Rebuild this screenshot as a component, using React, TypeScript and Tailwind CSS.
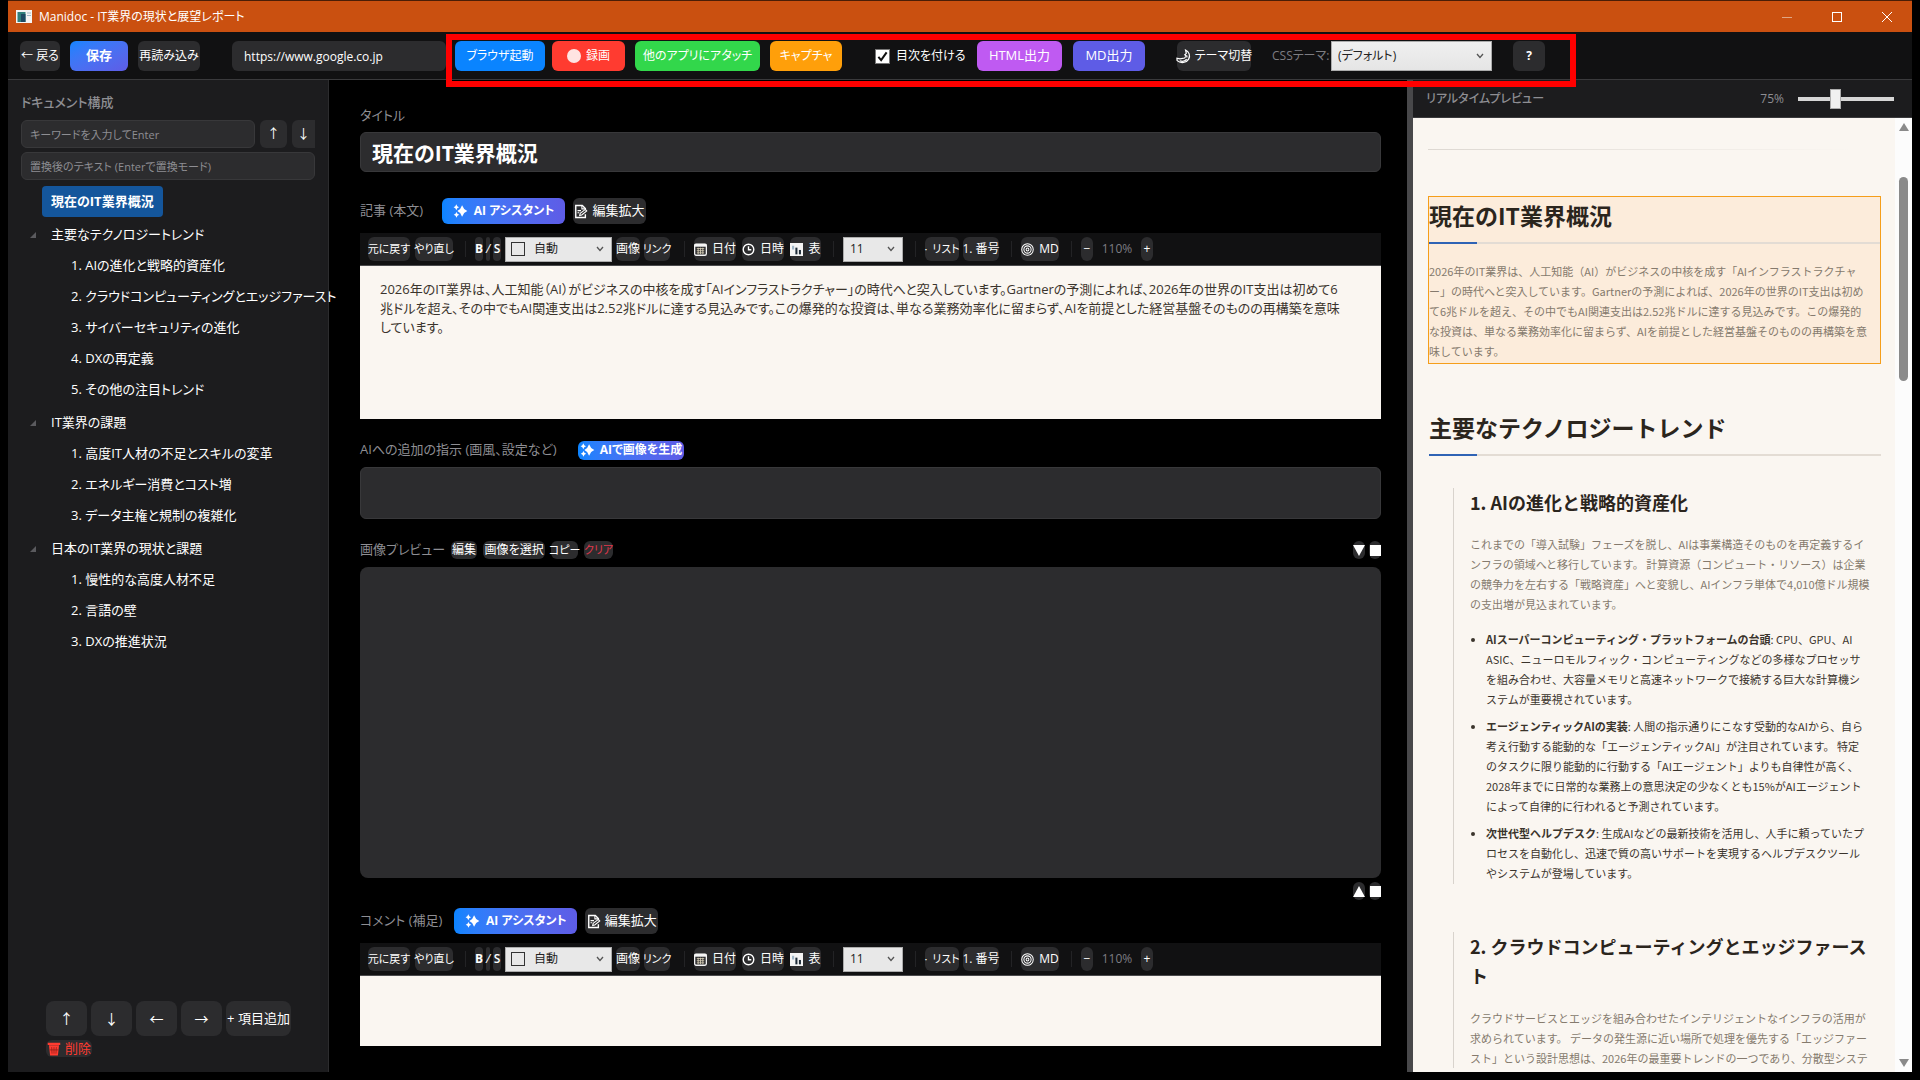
import type { ReactNode } from 'react'
import clsx from 'clsx'

interface TreeNode {
  label: string
  children?: string[]
}

const TREE: TreeNode[] = [
  { label: '現在のIT業界概況' },
  {
    label: '主要なテクノロジートレンド',
    children: [
      '1. AIの進化と戦略的資産化',
      '2. クラウドコンピューティングとエッジファースト',
      '3. サイバーセキュリティの進化',
      '4. DXの再定義',
      '5. その他の注目トレンド',
    ],
  },
  {
    label: 'IT業界の課題',
    children: ['1. 高度IT人材の不足とスキルの変革', '2. エネルギー消費とコスト増', '3. データ主権と規制の複雑化'],
  },
  {
    label: '日本のIT業界の現状と課題',
    children: ['1. 慢性的な高度人材不足', '2. 言語の壁', '3. DXの推進状況'],
  },
]

const ARTICLE = [
  '2026年のIT業界は、人工知能（AI）がビジネスの中核を成す「AIインフラストラクチャー」の時代へと突入しています。Gartnerの予測によれば、2026年の世界のIT支出は初めて6',
  '兆ドルを超え、その中でもAI関連支出は2.52兆ドルに達する見込みです。この爆発的な投資は、単なる業務効率化に留まらず、AIを前提とした経営基盤そのものの再構築を意味',
  'しています。',
].join('\n')

/* ---------- icons ---------- */

function SparkleIcon() {
  return (
    <svg viewBox="0 0 16 16" className="h-[14px] w-[15px] shrink-0" fill="currentColor" aria-hidden="true">
      <path d="M9.800 1.500 12.200 5.600l3.600 2.400-3.600 2.400-2.400 4.100-2.200-4.100L4.400 8l3.200-2.400Z" />
      <path d="m3.200.4 1.100 2.200 2 1.100-2 1.100-1.100 2.200-1.100-2.200-2-1.100 2-1.100Z" />
      <path d="m3.400 9 1.100 2.200 2 1.100-2 1.100-1.100 2.200-1.100-2.200-2-1.100 2-1.100Z" />
    </svg>
  )
}

function MemoIcon() {
  return (
    <svg viewBox="0 0 16 16" className="h-[15px] w-[14px] shrink-0" fill="none" stroke="currentColor" strokeWidth="1.600" aria-hidden="true">
      <path d="M13 6V4.500L9.500 1.200H2v13.600h11V11" />
      <path d="M9 1.500V5h3.500M4 7h4M4 9.500h2" strokeWidth="1.200" />
      <path d="m6.500 12.500.6-2.300L13 5.600l1.600 1.700-5.800 4.700Z" fill="#2c2c2e" strokeWidth="1.200" />
    </svg>
  )
}

function CalendarIcon() {
  return (
    <svg viewBox="0 0 14 14" className="h-[13px] w-[13px] shrink-0" aria-hidden="true">
      <rect x="0.700" y="1.200" width="12.600" height="12" rx="1.500" fill="none" stroke="#f4f4f4" strokeWidth="1.400" />
      <rect x="0.700" y="1" width="12.600" height="3" fill="#f4f4f4" />
      <path d="M3 6h8M3 8.300h8M3 10.600h8M4.500 5v7M7 5v7M9.500 5v7" stroke="#d8d0b8" strokeWidth="0.900" />
    </svg>
  )
}

function ClockIcon() {
  return (
    <svg viewBox="0 0 14 14" className="h-[13px] w-[13px] shrink-0" fill="none" stroke="currentColor" strokeWidth="1.500" aria-hidden="true">
      <circle cx="7" cy="7" r="5.700" />
      <path d="M7 3.500V7.300H10" />
    </svg>
  )
}

function ChartIcon() {
  return (
    <svg viewBox="0 0 14 14" className="h-[13px] w-[13px] shrink-0" aria-hidden="true">
      <rect x="0.700" y="0.700" width="12.600" height="12.600" fill="#f4f4f4" stroke="#f4f4f4" strokeWidth="1.400" />
      <path d="M2.200 3h2.300v4H2.200Z" fill="#9fb6c8" />
      <path d="M5.800 5h2.200v7.200H5.800Z" fill="#1d2b38" />
      <path d="M9.600 7.500h2.200v4.700H9.600Z" fill="#1d2b38" />
    </svg>
  )
}

function TargetIcon() {
  return (
    <svg viewBox="0 0 14 14" className="h-[13px] w-[13px] shrink-0" fill="none" stroke="currentColor" strokeWidth="1.100" aria-hidden="true">
      <circle cx="7" cy="7" r="6.200" />
      <circle cx="7" cy="7" r="3.900" />
      <circle cx="7" cy="7" r="1.500" />
    </svg>
  )
}

function MoonIcon() {
  return (
    <svg viewBox="0 0 16 16" className="h-[15px] w-[15px] shrink-0" fill="none" stroke="currentColor" strokeWidth="1.300" aria-hidden="true">
      <path d="M10.200 1.200c3.800 1.600 5.300 6 3.300 9.600-2.300 4-8.300 5.100-12.300 1.600L1 9.800l3.200.7 5-.9 1.600-2.200-1.400-1.200 1.600-1.600Z" />
      <path d="M11.600 7v2M4 12.500c2.500 1 5.500.4 7.400-1.600" />
    </svg>
  )
}

function TrashIcon() {
  return (
    <svg viewBox="0 0 14 15" className="h-[14px] w-[14px] shrink-0" aria-hidden="true">
      <path d="M.3.800h13.400v2.400H.3ZM1.600 3.600h10.800l-1.200 10.800H2.800Z" fill="#ff3b30" />
      <path d="M4.500 5.500l.4 7M7 5.500v7M9.500 5.500l-.4 7M2.500 8.500h9" stroke="#8a1d18" strokeWidth="0.800" />
    </svg>
  )
}

function Chevron() {
  return (
    <svg viewBox="0 0 8 6" className="pointer-events-none absolute top-1/2 right-2 h-[6px] w-2 -translate-y-1/2" fill="none" stroke="#555" strokeWidth="1.300" aria-hidden="true">
      <path d="m1 1 3 3.500L7 1" />
    </svg>
  )
}

/* ---------- small controls ---------- */

interface BtnProps {
  className?: string
  label?: string
  children: ReactNode
}

function Btn({ className, label, children }: BtnProps) {
  return (
    <button
      type="button"
      aria-label={label}
      className={clsx('flex shrink-0 items-center justify-center whitespace-nowrap text-white', className)}
    >
      {children}
    </button>
  )
}

function ToolBtn({ className, label, children }: BtnProps) {
  return (
    <Btn label={label} className={clsx('h-6 gap-[5px] rounded-md bg-[#2c2c2e]', className)}>
      {children}
    </Btn>
  )
}

function Separator() {
  return <span className="mr-[9px] ml-3 h-4 w-px shrink-0 bg-[#232325]" />
}

function EditorToolbar({ id }: { id: string }) {
  return (
    <div className="flex h-[33px] items-center border-b border-[#4a4a4c] bg-[#111112] pl-2 text-[12px]">
      <div className="flex gap-[5px] text-[11px]">
        <ToolBtn className="w-[42px]">元に戻す</ToolBtn>
        <ToolBtn className="w-[38px]">やり直し</ToolBtn>
      </div>
      <Separator />
      <div className="mr-[2px] flex items-center gap-1">
        <div className="flex gap-[3px]">
          <ToolBtn className="w-2 font-bold">B</ToolBtn>
          <ToolBtn className="w-1 italic">/</ToolBtn>
          <ToolBtn className="w-2 font-semibold">S</ToolBtn>
        </div>
        <div className="relative">
          <span className="pointer-events-none absolute top-[5px] left-[6px] size-[14px] border border-[#333]" />
          <select id={`${id}-color`} aria-label="文字色" className="h-[25px] w-[107px] appearance-none border border-[#acacac] bg-[#e8e8e8] pl-7 text-[#222]">
            <option>自動</option>
          </select>
          <Chevron />
        </div>
        <ToolBtn className="w-6">画像</ToolBtn>
        <ToolBtn className="w-[26px] text-[11px]">リンク</ToolBtn>
      </div>
      <Separator />
      <div className="flex gap-[6px]">
        <ToolBtn className="w-[42px]"><CalendarIcon />日付</ToolBtn>
        <ToolBtn className="w-[42px]"><ClockIcon />日時</ToolBtn>
        <ToolBtn className="w-[31px]"><ChartIcon />表</ToolBtn>
      </div>
      <Separator />
      <div className="relative">
        <select id={`${id}-size`} aria-label="文字サイズ" className="h-[25px] w-[60px] appearance-none border border-[#acacac] bg-[#e8e8e8] pl-[6px] text-[#222]">
          <option>11</option>
        </select>
        <Chevron />
      </div>
      <Separator />
      <div className="flex gap-1">
        <ToolBtn className="w-[34px] gap-[3px] text-[11px]"><span>·</span>リスト</ToolBtn>
        <ToolBtn className="w-9">1. 番号</ToolBtn>
      </div>
      <Separator />
      <ToolBtn className="w-[38px]"><TargetIcon />MD</ToolBtn>
      <Separator />
      <ToolBtn label="縮小" className="w-3 text-[#aaa]">−</ToolBtn>
      <span className="w-12 text-center text-[#7d7d82]">110%</span>
      <ToolBtn label="拡大" className="w-3">+</ToolBtn>
    </div>
  )
}

function AssistRow({ id, label }: { id: string; label: string }) {
  return (
    <div className="flex h-[26px] items-center">
      <label htmlFor={id} className="mr-3 min-w-[70px] text-[13px] text-[#8e8e93]">{label}</label>
      <Btn className="h-[26px] w-[123px] gap-[6px] rounded-md bg-linear-to-r from-[#0a84ff] to-[#5e5ce6] text-[12px] font-bold">
        <SparkleIcon />AI アシスタント
      </Btn>
      <Btn className="ml-2 h-[26px] w-[73px] gap-1 rounded-md bg-[#2c2c2e] text-[13px]">
        <MemoIcon />編集拡大
      </Btn>
    </div>
  )
}

/* ---------- window parts ---------- */

function TitleBar() {
  return (
    <div className="flex h-8 shrink-0 items-center border-t border-[#4a1d06] bg-[#ca5010] pl-2 text-white">
      <svg viewBox="0 0 16 13" className="h-[13px] w-4" aria-hidden="true">
        <rect width="16" height="13" fill="#f4f4f4" />
        <rect x="1.500" y="2" width="8" height="10" fill="#2f7f7c" />
        <rect x="5" y="4" width="4.500" height="8" fill="#1d4a63" />
        <path d="M11 3h4M11 5.500h4" stroke="#8ab" strokeWidth="0.800" />
      </svg>
      <span className="ml-[7px] text-[12px]">Manidoc - IT業界の現状と展望レポート</span>
      <div className="ml-auto flex">
        <Btn label="最小化" className="h-[31px] w-[50px]">
          <svg viewBox="0 0 12 12" className="size-3" stroke="#e0a684"><path d="M1 6.500h10" /></svg>
        </Btn>
        <Btn label="最大化" className="h-[31px] w-[50px]">
          <svg viewBox="0 0 12 12" className="size-3" fill="none" stroke="#fff"><rect x="1.500" y="1.500" width="9" height="9" /></svg>
        </Btn>
        <Btn label="閉じる" className="h-[31px] w-[50px]">
          <svg viewBox="0 0 12 12" className="size-3" stroke="#fff"><path d="m1 1 10 10M11 1 1 11" /></svg>
        </Btn>
      </div>
    </div>
  )
}

function Toolbar() {
  return (
    <header className="flex h-12 shrink-0 items-start border-b border-[#3a3a3c] bg-[#111112] pt-[9px] pl-3 text-[12px]">
      <Btn className="h-[30px] w-10 rounded-md bg-[#2c2c2e]">← 戻る</Btn>
      <Btn className="ml-[10px] h-[30px] w-[58px] rounded-md bg-linear-to-br from-[#0a84ff] to-[#5e5ce6] text-[13px] font-bold">保存</Btn>
      <Btn className="ml-[10px] h-[30px] w-[62px] rounded-md bg-[#2c2c2e]">再読み込み</Btn>
      <input
        aria-label="URL"
        className="ml-8 h-[30px] w-[214px] rounded-md bg-[#2c2c2e] px-3 text-white"
        defaultValue="https://www.google.co.jp"
      />
      <div className="relative ml-[9px] flex items-center">
        <Btn className="h-[30px] w-[90px] rounded-md bg-[#0a84ff]">ブラウザ起動</Btn>
        <Btn className="ml-[7px] h-[30px] w-[73px] gap-[5px] rounded-md bg-[#ff3b30]">
          <span className="size-[14px] rounded-full bg-[#ffe4e2]" />録画
        </Btn>
        <Btn className="ml-[10px] h-[30px] w-[125px] rounded-md bg-[#32d74b]">他のアプリにアタッチ</Btn>
        <Btn className="ml-[10px] h-[30px] w-[72px] rounded-md bg-[#ff9f0a]">キャプチャ</Btn>
        <label className="relative ml-[33px] flex w-[102px] items-center gap-[6px] whitespace-nowrap text-white">
          <input type="checkbox" defaultChecked className="size-[15px] shrink-0 appearance-none border border-[#777] bg-white" />
          <svg viewBox="0 0 12 12" className="pointer-events-none absolute left-[2px] h-[11px] w-[11px]" fill="none" stroke="#111" strokeWidth="2.200" aria-hidden="true">
            <path d="m1.500 6.500 3 3.500L10.500 1.500" />
          </svg>
          目次を付ける
        </label>
        <Btn className="h-[30px] w-[85px] rounded-md bg-[#bf5af2] text-[13px]">HTML出力</Btn>
        <Btn className="ml-[11px] h-[30px] w-[72px] rounded-md bg-[#5e5ce6] text-[13px]">MD出力</Btn>
        <Btn className="ml-8 h-[30px] w-[74px] gap-1 rounded-md bg-[#2c2c2e]"><MoonIcon />テーマ切替</Btn>
        <label htmlFor="css-theme" className="ml-[21px] w-[59px] whitespace-nowrap text-[#7d7d82]">CSSテーマ:</label>
        <div className="relative">
          <select id="css-theme" className="h-[30px] w-[161px] appearance-none border border-[#acacac] bg-linear-to-b from-[#f0f0f0] to-[#e5e5e5] pl-[6px] text-[#222]">
            <option>(デフォルト)</option>
          </select>
          <Chevron />
        </div>
        <Btn label="ヘルプ" className="ml-[21px] h-[30px] w-8 rounded-md bg-[#2c2c2e] font-bold">?</Btn>
        {/* output tools highlight */}
        <div className="pointer-events-none absolute -top-[7px] -right-[31px] -bottom-[16px] -left-[9px] z-10 border-[6px] border-[#ff0000]" />
      </div>
    </header>
  )
}

function Sidebar() {
  return (
    <aside className="relative z-10 flex w-[321px] shrink-0 flex-col border-r border-[#2c2c2e] bg-[#1c1c1e] px-[13px] pt-3 text-white">
      <h2 className="text-[13px] leading-5 font-medium text-[#8e8e93]">ドキュメント構成</h2>
      <div className="mt-2 flex gap-[5px]">
        <input
          aria-label="検索"
          placeholder="キーワードを入力してEnter"
          className="h-7 min-w-0 flex-1 rounded-md border border-[#38383a] bg-[#2c2c2e] px-2 text-[11px] placeholder:text-[#8e8e93]"
        />
        <Btn label="前を検索" className="h-7 w-[27px] rounded-md bg-[#2c2c2e] text-[13px]">↑</Btn>
        <Btn label="次を検索" className="h-7 w-[23px] rounded-l-md bg-[#2c2c2e] text-[13px]">↓</Btn>
      </div>
      <input
        aria-label="置換"
        placeholder="置換後のテキスト (Enterで置換モード)"
        className="mt-1 h-7 rounded-md border border-[#38383a] bg-[#2c2c2e] px-2 text-[11px] placeholder:text-[#8e8e93]"
      />
      <ul className="mt-[6px] space-y-[2px] text-[13px]">
        {TREE.map((node, i) => (
          <li key={node.label}>
            <div className="flex h-[31px] items-center">
              <svg viewBox="0 0 6 6" className="mr-[6px] ml-[9px] size-[6px]" aria-hidden="true">
                {node.children && <path d="M6 0v6H0Z" fill="#5a5a5e" />}
              </svg>
              <button
                type="button"
                className={clsx('h-[31px] rounded-sm px-[9px] whitespace-nowrap', i === 0 && 'bg-[#14569c] font-bold')}
              >
                {node.label}
              </button>
            </div>
            {node.children && (
              <ul className="pl-[50px]">
                {node.children.map((child) => (
                  <li key={child} className="h-[31px]">
                    <button type="button" className="h-[31px] whitespace-nowrap">{child}</button>
                  </li>
                ))}
              </ul>
            )}
          </li>
        ))}
      </ul>
      <div className="mt-auto pb-[15px] pl-[25px] text-[14px]">
        <div className="flex gap-1">
          <Btn label="上へ" className="h-[35px] w-[41px] rounded-lg bg-[#2c2c2e]">↑</Btn>
          <Btn label="下へ" className="h-[35px] w-[41px] rounded-lg bg-[#2c2c2e]">↓</Btn>
          <Btn label="左へ" className="h-[35px] w-[41px] rounded-lg bg-[#2c2c2e]">←</Btn>
          <Btn label="右へ" className="h-[35px] w-[41px] rounded-lg bg-[#2c2c2e]">→</Btn>
          <Btn className="h-[35px] w-[65px] rounded-lg bg-[#2c2c2e] text-[13px]">+ 項目追加</Btn>
        </div>
        <Btn className="mt-1 h-[17px] w-[46px] gap-1 rounded-md bg-[#2c2c2e] text-[13px]"><TrashIcon /><span className="text-[#ff3b30]">削除</span></Btn>
      </div>
    </aside>
  )
}

function SmallBtn({ className, label, children }: BtnProps) {
  return (
    <Btn label={label} className={clsx('h-[18px] rounded-md bg-[#2c2c2e]', className)}>
      {children}
    </Btn>
  )
}

function Square() {
  return <span className="size-[11px] bg-white" />
}

function Editor() {
  return (
    <main className="flex min-w-0 flex-1 flex-col bg-black pt-[25px] pr-[26px] pb-[26px] pl-[31px]">
      <label htmlFor="doc-title" className="text-[13px] leading-5 text-[#8e8e93]">タイトル</label>
      <input
        id="doc-title"
        defaultValue="現在のIT業界概況"
        className="mt-[7px] h-10 rounded-md border border-[#38383a] bg-[#2c2c2e] px-[11px] text-[21px] font-bold text-white"
      />
      <div className="mt-[26px]">
        <AssistRow id="article" label="記事 (本文)" />
      </div>
      <div className="mt-[9px]">
        <EditorToolbar id="article" />
        <textarea
          id="article"
          defaultValue={ARTICLE}
          className="block h-[153px] w-full resize-none overflow-hidden bg-[#faf6f1] px-5 py-[14px] text-[13px] leading-[19px] whitespace-pre text-[#3a342c]"
        />
      </div>
      <div className="mt-[21px] flex h-5 items-center">
        <label htmlFor="ai-extra" className="mr-3 min-w-[206px] text-[13px] text-[#8e8e93]">AIへの追加の指示 (画風、設定など)</label>
        <Btn className="h-[19px] w-[106px] gap-[5px] rounded-md bg-linear-to-r from-[#0a84ff] to-[#5e5ce6] text-[12px] font-bold">
          <SparkleIcon />AIで画像を生成
        </Btn>
      </div>
      <textarea id="ai-extra" className="mt-[7px] block h-[52px] resize-none rounded-md border border-[#38383a] bg-[#2c2c2e] text-white" />
      <div className="mt-[21px] flex h-5 items-center gap-[6px]">
        <span className="text-[13px] text-[#8e8e93]">画像プレビュー</span>
        <SmallBtn className="w-[26px] text-[12px]">編集</SmallBtn>
        <SmallBtn className="w-[62px] text-[12px]">画像を選択</SmallBtn>
        <SmallBtn className="w-[27px] text-[11px]">コピー</SmallBtn>
        <SmallBtn className="w-[29px] text-[11px]"><span className="text-[#e0384c]">クリア</span></SmallBtn>
        <div className="ml-auto flex gap-1">
          <SmallBtn label="下へ広げる" className="w-3">
            <svg viewBox="0 0 12 11" className="h-[11px] w-3 shrink-0" fill="#fff"><path d="M0 0h12L6 11Z" /></svg>
          </SmallBtn>
          <SmallBtn label="最大化" className="w-3"><Square /></SmallBtn>
        </div>
      </div>
      <div className="mt-[7px] min-h-40 flex-1 rounded-lg bg-[#2c2c2e]" />
      <div className="mt-1 ml-auto flex gap-1">
        <SmallBtn label="上へ縮める" className="w-3">
          <svg viewBox="0 0 12 11" className="h-[11px] w-3 shrink-0" fill="#fff"><path d="M0 11h12L6 0Z" /></svg>
        </SmallBtn>
        <SmallBtn label="元のサイズ" className="w-3"><Square /></SmallBtn>
      </div>
      <div className="mt-2">
        <AssistRow id="comment" label="コメント (補足)" />
      </div>
      <div className="mt-[9px]">
        <EditorToolbar id="comment" />
        <textarea id="comment" className="block h-[70px] w-full resize-none bg-[#faf6f1] px-5 py-[14px] text-[13px] text-[#3a342c]" />
      </div>
    </main>
  )
}

/* ---------- preview ---------- */

function Lines({ rows }: { rows: ReactNode[] }) {
  return (
    <>
      {rows.map((row, i) => (
        <span key={i} className="block whitespace-nowrap">{row}</span>
      ))}
    </>
  )
}

function ChapterTitle({ children }: { children: ReactNode }) {
  return (
    <>
      <h2 className="text-[23px] leading-[30px] font-bold text-[#2b251d]">{children}</h2>
      <div className="mt-3 h-[2px] bg-[#e3dcd4]">
        <div className="h-[2px] w-12 bg-[#2f63b5]" />
      </div>
    </>
  )
}

function Preview() {
  return (
    <section className="flex w-[505px] shrink-0 flex-col border-l-[6px] border-[#48484a] bg-[#1c1c1e]">
      <div className="flex h-[38px] shrink-0 items-center border-b border-[#3a3a3c] pr-[18px] pl-[13px] text-[12px] text-[#8e8e93]">
        <h2 className="font-medium">リアルタイムプレビュー</h2>
        <label htmlFor="zoom" className="mr-[14px] ml-auto">75%</label>
        <input
          id="zoom"
          type="range"
          min={0}
          max={100}
          defaultValue={38}
          className="h-5 w-24 appearance-none bg-transparent [&::-webkit-slider-runnable-track]:h-1 [&::-webkit-slider-runnable-track]:bg-[#d6d6d6] [&::-webkit-slider-thumb]:-mt-2 [&::-webkit-slider-thumb]:h-5 [&::-webkit-slider-thumb]:w-[11px] [&::-webkit-slider-thumb]:appearance-none [&::-webkit-slider-thumb]:border [&::-webkit-slider-thumb]:border-[#acacac] [&::-webkit-slider-thumb]:bg-[#f0f0f0]"
        />
      </div>
      <div className="flex min-h-0 flex-1 bg-[#faf6f1] font-['Noto_Sans_CJK_JP',sans-serif] [font-feature-settings:normal]">
        <article className="min-w-0 flex-1 overflow-hidden pr-[14px] pl-[15px] text-[11px] leading-5 text-[#3a342c]">
          <div className="mt-[31px] mr-7 h-px bg-linear-to-r from-[#ddd8d2] to-[#faf6f1]" />
          <div className="mt-[46px] h-[168px] border border-[#f59e1b] bg-[#fcecdb] pt-[3px]">
            <ChapterTitle>現在のIT業界概況</ChapterTitle>
            <p className="mt-[17px] text-[#857a6d]">
              <Lines
                rows={[
                  '2026年のIT業界は、人工知能（AI）がビジネスの中核を成す「AIインフラストラクチャ',
                  'ー」の時代へと突入しています。Gartnerの予測によれば、2026年の世界のIT支出は初め',
                  'て6兆ドルを超え、その中でもAI関連支出は2.52兆ドルに達する見込みです。この爆発的',
                  'な投資は、単なる業務効率化に留まらず、AIを前提とした経営基盤そのものの再構築を意',
                  '味しています。',
                ]}
              />
            </p>
          </div>
          <div className="mt-12 pl-px">
            <ChapterTitle>主要なテクノロジートレンド</ChapterTitle>
          </div>
          <div className="mt-8 ml-[25px] border-l border-[#d8d3cd] pb-px pl-4">
            <h3 className="text-[18px] leading-[29px] font-bold text-[#2b251d]">1. AIの進化と戦略的資産化</h3>
            <p className="mt-[17px] text-[#857a6d]">
              <Lines
                rows={[
                  'これまでの「導入試験」フェーズを脱し、AIは事業構造そのものを再定義するイ',
                  'ンフラの領域へと移行しています。 計算資源（コンピュート・リソース）は企業',
                  'の競争力を左右する「戦略資産」へと変貌し、AIインフラ単体で4,010億ドル規模',
                  'の支出増が見込まれています。',
                ]}
              />
            </p>
            <ul className="mt-[15px] list-disc space-y-[7px] pl-4">
              <li>
                <Lines
                  rows={[
                    <><strong>AIスーパーコンピューティング・プラットフォームの台頭</strong>: CPU、GPU、AI</>,
                    'ASIC、ニューロモルフィック・コンピューティングなどの多様なプロセッサ',
                    'を組み合わせ、大容量メモリと高速ネットワークで接続する巨大な計算機シ',
                    'ステムが重要視されています。',
                  ]}
                />
              </li>
              <li>
                <Lines
                  rows={[
                    <><strong>エージェンティックAIの実装</strong>: 人間の指示通りにこなす受動的なAIから、自ら</>,
                    '考え行動する能動的な「エージェンティックAI」が注目されています。 特定',
                    'のタスクに限り能動的に行動する「AIエージェント」よりも自律性が高く、',
                    '2028年までに日常的な業務上の意思決定の少なくとも15%がAIエージェント',
                    'によって自律的に行われると予測されています。',
                  ]}
                />
              </li>
              <li>
                <Lines
                  rows={[
                    <><strong>次世代型ヘルプデスク</strong>: 生成AIなどの最新技術を活用し、人手に頼っていたプ</>,
                    'ロセスを自動化し、迅速で質の高いサポートを実現するヘルプデスクツール',
                    'やシステムが登場しています。',
                  ]}
                />
              </li>
            </ul>
          </div>
          <div className="mt-12 ml-[25px] border-l border-[#d8d3cd] pl-4">
            <h3 className="text-[18px] leading-[29px] font-bold text-[#2b251d]">
              2. クラウドコンピューティングとエッジファースト
            </h3>
            <p className="mt-[18px] text-[#857a6d]">
              <Lines
                rows={[
                  'クラウドサービスとエッジを組み合わせたインテリジェントなインフラの活用が',
                  '求められています。 データの発生源に近い場所で処理を優先する「エッジファー',
                  'スト」という設計思想は、2026年の最重要トレンドの一つであり、分散型システ',
                ]}
              />
            </p>
          </div>
        </article>
        <div className="flex w-[17px] shrink-0 flex-col items-center bg-[#fcfcfc] py-[5px]">
          <svg viewBox="0 0 10 8" className="h-2 w-[10px]" fill="#8a8a8a"><path d="M5 0 10 8H0Z" /></svg>
          <div className="mt-[46px] h-[204px] w-[9px] rounded-full bg-[#8a8a8a]" />
          <svg viewBox="0 0 10 8" className="mt-auto h-2 w-[10px]" fill="#8a8a8a"><path d="M5 8 10 0H0Z" /></svg>
        </div>
      </div>
    </section>
  )
}

export default function App() {
  return (
    <div className="h-screen bg-black px-2 pb-2 font-['Open_Sans','Noto_Sans_CJK_JP',sans-serif] [font-feature-settings:'palt']">
      <div className="flex h-full flex-col overflow-hidden">
        <TitleBar />
        {/* keeps the highlight frame above the sidebar and panes */}
        <div className="relative z-20">
          <Toolbar />
        </div>
        <div className="flex min-h-0 flex-1">
          <Sidebar />
          <Editor />
          <Preview />
        </div>
      </div>
    </div>
  )
}
